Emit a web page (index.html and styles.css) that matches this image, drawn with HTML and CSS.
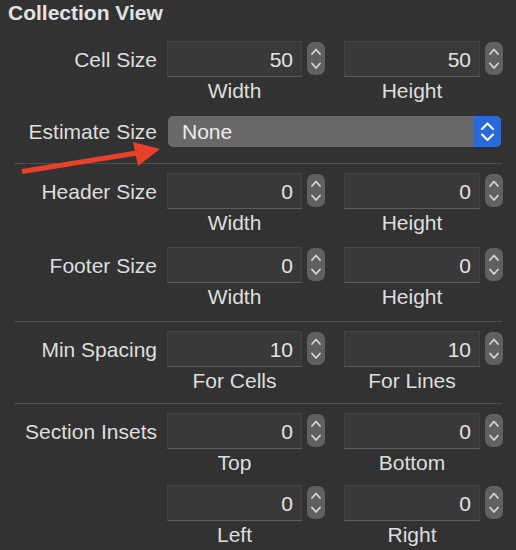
FILE: index.html
```html
<!DOCTYPE html>
<html>
<head>
<meta charset="utf-8">
<link rel="stylesheet" href="styles.css">
</head>
<body>
<div class="panel">
  <div class="title">Collection View</div>

  <div class="row r-cell">
    <div class="label">Cell Size</div>
    <div class="field">50</div>
    <div class="stepper"><svg viewBox="0 0 18 33" width="18" height="33"><polyline points="5,12 9,7.5 13,12"/><polyline points="5,21.5 9,26 13,21.5"/></svg></div>
    <div class="field f2">50</div>
    <div class="stepper"><svg viewBox="0 0 18 33" width="18" height="33"><polyline points="5,12 9,7.5 13,12"/><polyline points="5,21.5 9,26 13,21.5"/></svg></div>
  </div>
  <div class="captions"><div class="cap">Width</div><div class="cap c2">Height</div></div>

  <div class="row popup-row">
    <div class="label">Estimate Size</div>
    <div class="popup">
      <div class="popup-text">None</div>
      <div class="popup-btn"><svg viewBox="0 0 27 31" width="27" height="31"><polyline points="8,13 13.5,7.5 19,13"/><polyline points="8,18.5 13.5,24 19,18.5"/></svg></div>
    </div>
  </div>

  <div class="sep s1"></div>

  <div class="row r-header">
    <div class="label">Header Size</div>
    <div class="field">0</div>
    <div class="stepper"><svg viewBox="0 0 18 33" width="18" height="33"><polyline points="5,12 9,7.5 13,12"/><polyline points="5,21.5 9,26 13,21.5"/></svg></div>
    <div class="field f2">0</div>
    <div class="stepper"><svg viewBox="0 0 18 33" width="18" height="33"><polyline points="5,12 9,7.5 13,12"/><polyline points="5,21.5 9,26 13,21.5"/></svg></div>
  </div>
  <div class="captions"><div class="cap">Width</div><div class="cap c2">Height</div></div>

  <div class="row r-footer">
    <div class="label">Footer Size</div>
    <div class="field">0</div>
    <div class="stepper"><svg viewBox="0 0 18 33" width="18" height="33"><polyline points="5,12 9,7.5 13,12"/><polyline points="5,21.5 9,26 13,21.5"/></svg></div>
    <div class="field f2">0</div>
    <div class="stepper"><svg viewBox="0 0 18 33" width="18" height="33"><polyline points="5,12 9,7.5 13,12"/><polyline points="5,21.5 9,26 13,21.5"/></svg></div>
  </div>
  <div class="captions"><div class="cap">Width</div><div class="cap c2">Height</div></div>

  <div class="sep s2"></div>

  <div class="row r-min">
    <div class="label">Min Spacing</div>
    <div class="field">10</div>
    <div class="stepper"><svg viewBox="0 0 18 33" width="18" height="33"><polyline points="5,12 9,7.5 13,12"/><polyline points="5,21.5 9,26 13,21.5"/></svg></div>
    <div class="field f2">10</div>
    <div class="stepper"><svg viewBox="0 0 18 33" width="18" height="33"><polyline points="5,12 9,7.5 13,12"/><polyline points="5,21.5 9,26 13,21.5"/></svg></div>
  </div>
  <div class="captions"><div class="cap">For Cells</div><div class="cap c2">For Lines</div></div>

  <div class="sep s3"></div>

  <div class="row r-inset">
    <div class="label">Section Insets</div>
    <div class="field">0</div>
    <div class="stepper"><svg viewBox="0 0 18 33" width="18" height="33"><polyline points="5,12 9,7.5 13,12"/><polyline points="5,21.5 9,26 13,21.5"/></svg></div>
    <div class="field f2">0</div>
    <div class="stepper"><svg viewBox="0 0 18 33" width="18" height="33"><polyline points="5,12 9,7.5 13,12"/><polyline points="5,21.5 9,26 13,21.5"/></svg></div>
  </div>
  <div class="captions"><div class="cap">Top</div><div class="cap c2">Bottom</div></div>

  <div class="row r-inset2">
    <div class="label"></div>
    <div class="field">0</div>
    <div class="stepper"><svg viewBox="0 0 18 33" width="18" height="33"><polyline points="5,12 9,7.5 13,12"/><polyline points="5,21.5 9,26 13,21.5"/></svg></div>
    <div class="field f2">0</div>
    <div class="stepper"><svg viewBox="0 0 18 33" width="18" height="33"><polyline points="5,12 9,7.5 13,12"/><polyline points="5,21.5 9,26 13,21.5"/></svg></div>
  </div>
  <div class="captions"><div class="cap">Left</div><div class="cap c2">Right</div></div>

  <svg class="arrow" viewBox="0 0 516 550" width="516" height="550">
    <line x1="22" y1="171.5" x2="140" y2="152.5" />
    <polygon points="160,149 133,142 138,166" />
  </svg>
</div>
</body>
</html>
```

FILE: styles.css
```css
html, body {
  margin: 0;
  padding: 0;
  background: #323232;
}

.panel {
  position: relative;
  width: 516px;
  height: 550px;
  overflow: hidden;
  display: flex;
  flex-direction: column;
  font-family: "Liberation Sans", Arial, Helvetica, sans-serif;
  font-size: 21px;
  color: #dedede;
}

.title {
  font-weight: bold;
  line-height: 24px;
  padding: 1px 0 0 8px;
  color: #e2e2e2;
}

.row {
  display: flex;
  height: 36px;
  flex: none;
}

.r-cell { margin-top: 16px; }
.r-header { margin-top: 9px; }
.r-footer { margin-top: 12px; }
.r-min { margin-top: 9px; }
.r-inset { margin-top: 9px; }
.r-inset2 { margin-top: 10px; }

.label {
  width: 157px;
  padding-right: 10px;
  text-align: right;
  white-space: nowrap;
  line-height: 32px;
  padding-top: 3px;
  flex: none;
}

.field {
  box-sizing: border-box;
  width: 135px;
  height: 36px;
  flex: none;
  background: #393939;
  border: 1px solid #444444;
  border-bottom-color: #5c5c5c;
  text-align: right;
  padding: 2px 8px 0 0;
  line-height: 32px;
  color: #e4e4e4;
}

.field.f2 {
  width: 136px;
  margin-left: 19px;
}

.stepper {
  flex: none;
  width: 18px;
  height: 33px;
  margin: 1px 0 0 5px;
  border-radius: 7px;
  background: #606060;
}

.stepper svg {
  display: block;
  fill: none;
  stroke: #d6d6d6;
  stroke-width: 1.8;
  stroke-linecap: round;
  stroke-linejoin: round;
}

.captions {
  display: flex;
  margin-top: 2px;
  padding-left: 167px;
  line-height: 24px;
  flex: none;
}

.cap {
  width: 135px;
  text-align: center;
  white-space: nowrap;
}

.cap.c2 {
  width: 136px;
  margin-left: 42px;
}

.popup-row {
  margin-top: 13px;
  height: 31px;
}

.popup-row .label {
  line-height: 31px;
  padding-top: 0;
}

.popup {
  display: flex;
  margin-left: 1px;
  width: 333px;
  height: 31px;
  border-radius: 5px;
  background: #686868;
  overflow: hidden;
}

.popup-text {
  flex: 1;
  padding-left: 14px;
  line-height: 31px;
  color: #ececec;
}

.popup-btn {
  width: 27px;
  height: 31px;
  background: #2c69d8;
}

.popup-btn svg {
  display: block;
  fill: none;
  stroke: #ffffff;
  stroke-width: 2;
  stroke-linecap: round;
  stroke-linejoin: round;
}

.sep {
  flex: none;
  height: 1px;
  margin-left: 14px;
  width: 488px;
  background: #4d4d4d;
}

.s1 { margin-top: 16px; }
.s2 { margin-top: 12px; }
.s3 { margin-top: 10px; }

.arrow {
  position: absolute;
  left: 0;
  top: 0;
  pointer-events: none;
}

.arrow line {
  stroke: #e8402a;
  stroke-width: 5;
}

.arrow polygon {
  fill: #e8402a;
}
```
